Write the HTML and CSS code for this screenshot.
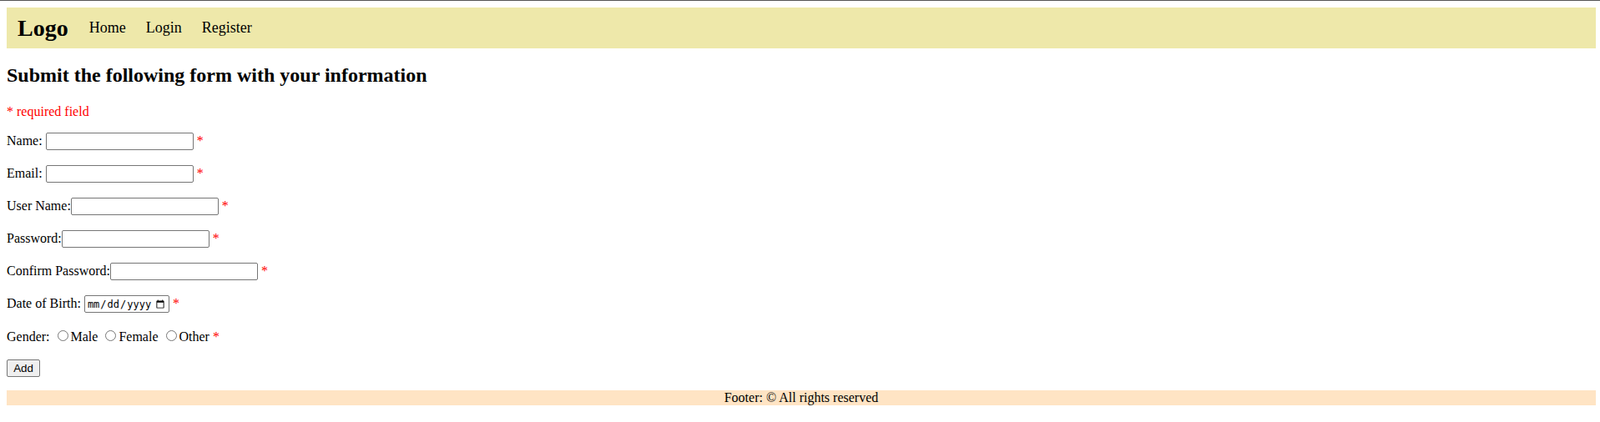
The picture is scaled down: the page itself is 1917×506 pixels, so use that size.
FILE: index.html
```html
<!DOCTYPE html>
<html lang="en">
<head>
<meta charset="utf-8">
<title>Form</title>
<link rel="stylesheet" href="styles.css">
</head>
<body>
<header class="topbar">
  <span class="logo">Logo</span>
  <nav class="nav">
    <a href="#" class="nav-link">Home</a>
    <a href="#" class="nav-link">Login</a>
    <a href="#" class="nav-link">Register</a>
  </nav>
</header>
<h2 class="title">Submit the following form with your information</h2>
<p class="error">* required field</p>
<form class="form">
  <p class="row">Name: <input type="text" class="field"> <span class="error">*</span></p>
  <p class="row">Email: <input type="text" class="field"> <span class="error">*</span></p>
  <p class="row">User Name:<input type="text" class="field"> <span class="error">*</span></p>
  <p class="row">Password:<input type="password" class="field"> <span class="error">*</span></p>
  <p class="row">Confirm Password:<input type="password" class="field"> <span class="error">*</span></p>
  <p class="row">Date of Birth: <input type="date" class="date"> <span class="error">*</span></p>
  <p class="row row-gender">Gender: <input type="radio" name="gender" class="radio">Male <input type="radio" name="gender" class="radio">Female <input type="radio" name="gender" class="radio">Other <span class="error">*</span></p>
  <p class="row row-btn"><button type="button" class="btn">Add</button></p>
</form>
<footer class="footer">Footer: &copy; All rights reserved</footer>
</body>
</html>
```
FILE: styles.css
```css
html {
  border-top: 1px solid #555555;
}
body {
  margin: 8px 5px 8px 8px;
  font-family: "Liberation Serif", "Times New Roman", serif;
  font-size: 16px;
  color: #000;
}
.topbar {
  display: flex;
  align-items: center;
  height: 49px;
  padding: 0 12px 0 13px;
  background: #eee8aa;
}
.logo {
  font-size: 28px;
  font-weight: bold;
  margin-right: 25px;
}
.nav {
  display: flex;
  gap: 24px;
}
.nav-link {
  font-size: 18px;
  color: #000;
  text-decoration: none;
}
.title {
  font-size: 24px;
  margin: 19px 0 21px 0;
}
.error {
  color: #ff0000;
}
p.error {
  margin: 16px 0;
}
.form {
  margin: 0 0 16px 0;
}
.row {
  margin: 16px 0;
  min-height: 23px;
}
.row-gender {
  min-height: 22px;
}
.row-btn {
  min-height: 21px;
  margin-bottom: 0;
}
.field {
  box-sizing: border-box;
  width: 177px;
  height: 21px;
  font-family: "Liberation Sans", Arial, sans-serif;
  font-size: 13.33px;
  border: 1px solid #767676;
  border-radius: 2px;
  padding: 1px 2px;
  margin: 0;
}
.date {
  box-sizing: border-box;
  width: 102px;
  height: 21px;
  font-family: "DejaVu Sans Mono", "Liberation Mono", monospace;
  font-size: 12px;
  border: 1px solid #767676;
  border-radius: 2px;
  padding: 1px 2px;
  margin: 0;
}
.radio {
  margin: 3px 3px 0 5px;
}
.btn {
  box-sizing: border-box;
  width: 40px;
  height: 21px;
  font-family: "Liberation Sans", Arial, sans-serif;
  font-size: 13.33px;
  padding: 1px 6px;
  border: 1px solid #767676;
  border-radius: 2px;
  background: #efefef;
  color: #000;
}
.footer {
  background: #ffe4c4;
  text-align: center;
  line-height: 18px;
}
```
